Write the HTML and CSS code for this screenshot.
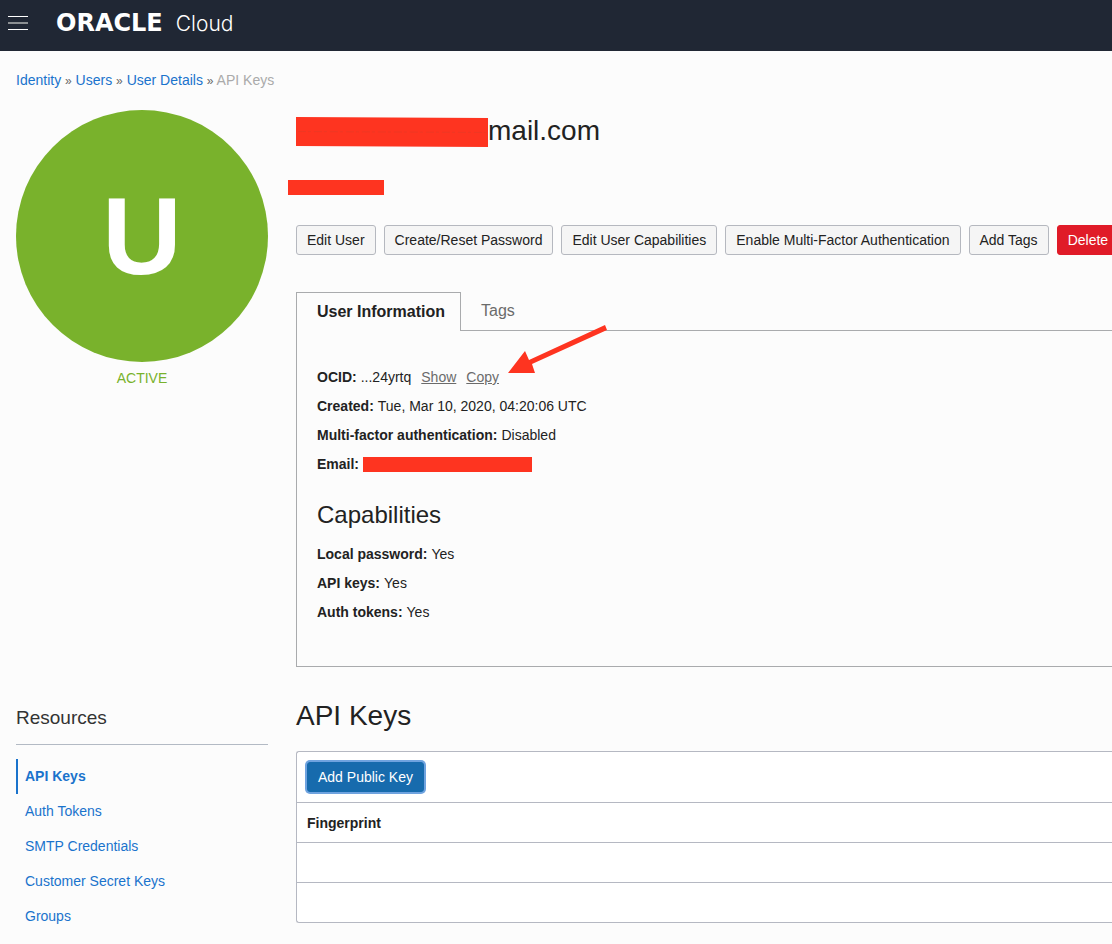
FILE: index.html
```html
<!DOCTYPE html>
<html lang="en">
<head>
<meta charset="utf-8">
<meta name="viewport" content="width=device-width, initial-scale=1">
<title>User Details - Oracle Cloud</title>
<link rel="stylesheet" href="styles.css">
</head>
<body>
<header class="topbar">
  <button class="menu-button" type="button" aria-label="Open navigation menu">
    <svg width="20" height="16" viewBox="0 0 20 16" aria-hidden="true">
      <rect y="1" width="20" height="1" fill="#fff"/>
      <rect y="7" width="20" height="2" fill="#8b8f92"/>
      <rect y="14" width="20" height="1" fill="#fff"/>
    </svg>
  </button>
  <a class="brand" href="#"><span class="brand-name">ORACLE</span><span class="brand-product">Cloud</span></a>
</header>

<main class="page">
  <nav class="breadcrumb" aria-label="Breadcrumb">
    <a href="#">Identity</a> <span class="sep">»</span> <a href="#">Users</a> <span class="sep">»</span> <a href="#">User Details</a> <span class="sep">»</span> <span class="current">API Keys</span>
  </nav>

  <div class="layout">
    <aside class="profile">
      <div class="avatar">U</div>
      <p class="status">ACTIVE</p>
    </aside>

    <section class="details">
      <h1 class="title">
        <svg class="title-mask" width="192" height="30" viewBox="0 0 192 30" aria-hidden="true"><path d="M0 0L192 1V30L0 29Z" fill="#fe3420"/><path d="M2 14.500L190 15.500" stroke="#e63b27" stroke-width="1" stroke-dasharray="8 2 3 3" opacity=".6"/></svg><span>mail.com</span>
      </h1>
      <div class="mask mask-description"></div>

      <div class="actions">
        <button class="button" type="button">Edit User</button>
        <button class="button" type="button">Create/Reset Password</button>
        <button class="button" type="button">Edit User Capabilities</button>
        <button class="button" type="button">Enable Multi-Factor Authentication</button>
        <button class="button" type="button">Add Tags</button>
        <button class="button button-danger" type="button">Delete</button>
      </div>

      <div class="tabs" role="tablist">
        <button class="tab tab-active" type="button" role="tab" aria-selected="true">User Information</button>
        <button class="tab" type="button" role="tab" aria-selected="false">Tags</button>
      </div>
      <div class="panel" role="tabpanel">
        <dl class="facts">
          <div class="fact">
            <dt>OCID:</dt>
            <dd class="ocid"><span>...24yrtq</span><a href="#">Show</a><span class="copy"><a href="#">Copy</a><svg class="arrow" width="102" height="54" viewBox="0 0 102 54" aria-hidden="true"><path d="M98 2L100 7L25 41L28 50L1 50L18 28L22 37Z" fill="#fe3420"/></svg></span></dd>
          </div>
          <div class="fact"><dt>Created:</dt><dd>Tue, Mar 10, 2020, 04:20:06 UTC</dd></div>
          <div class="fact"><dt>Multi-factor authentication:</dt><dd>Disabled</dd></div>
          <div class="fact"><dt>Email:</dt><dd class="mask mask-email"></dd></div>
        </dl>
        <h3 class="subheading">Capabilities</h3>
        <dl class="facts">
          <div class="fact"><dt>Local password:</dt><dd>Yes</dd></div>
          <div class="fact"><dt>API keys:</dt><dd>Yes</dd></div>
          <div class="fact"><dt>Auth tokens:</dt><dd>Yes</dd></div>
        </dl>
      </div>
    </section>

    <nav class="resources" aria-labelledby="resources-title">
      <h2 class="resources-title" id="resources-title">Resources</h2>
      <ul class="resource-list">
        <li><a class="resource resource-active" href="#" aria-current="page">API Keys</a></li>
        <li><a class="resource" href="#">Auth Tokens</a></li>
        <li><a class="resource" href="#">SMTP Credentials</a></li>
        <li><a class="resource" href="#">Customer Secret Keys</a></li>
        <li><a class="resource" href="#">Groups</a></li>
      </ul>
    </nav>

    <section class="keys">
      <h2 class="keys-title">API Keys</h2>
      <div class="key-box">
        <div class="key-toolbar"><button class="button button-primary" type="button">Add Public Key</button></div>
        <table class="key-table">
          <thead><tr><th scope="col">Fingerprint</th></tr></thead>
          <tbody><tr><td></td></tr><tr><td></td></tr></tbody>
        </table>
      </div>
    </section>
  </div>
</main>
</body>
</html>
```

FILE: styles.css
```css
* {
  box-sizing: border-box;
}

body {
  margin: 0;
  background: #fcfcfc;
  color: #222;
  font: 14px/20px "Liberation Sans", Arial, sans-serif;
}

h1, h2, h3, p, dl, dd, ul {
  margin: 0;
  padding: 0;
  font-weight: 400;
}

button {
  font: inherit;
  cursor: pointer;
}

a {
  color: #1a73cc;
  text-decoration: none;
}

.topbar {
  display: flex;
  align-items: center;
  gap: 28px;
  height: 51px;
  padding: 0 8px 5px;
  background: #202734;
}

.menu-button {
  display: flex;
  padding: 0;
  border: 0;
  background: none;
}

.brand {
  display: flex;
  align-items: baseline;
  gap: 13px;
  color: #fff;
  line-height: 28px;
}

.brand-name {
  font-family: "DejaVu Sans", sans-serif;
  font-size: 24px;
  font-weight: 700;
}

.brand-product {
  font-family: Inter, sans-serif;
  font-size: 21px;
  font-weight: 300;
}

.page {
  padding: 19px 0 10px 16px;
  overflow: hidden;
}

.breadcrumb {
  margin-bottom: 20px;
}

.sep {
  color: #666;
  font-size: 12px;
  line-height: 12px;
}

.current {
  color: #aaa;
}

.layout {
  display: grid;
  grid-template-columns: 252px minmax(0, 1fr);
  gap: 30px 28px;
}

.avatar {
  display: flex;
  align-items: center;
  justify-content: center;
  aspect-ratio: 1;
  border-radius: 50%;
  background: #79b22c;
  color: #fff;
  font-size: 110px;
  font-weight: 700;
}

.status {
  color: #79b22c;
  line-height: 32px;
  text-align: center;
}

.title {
  display: flex;
  align-items: center;
  font-size: 28px;
  line-height: 42px;
}

.title-mask {
  margin-top: 2px;
}

.mask {
  height: 15px;
  background: #fe3420;
}

.mask-description {
  width: 96px;
  margin: 28px 0 30px -8px;
}

.mask-email {
  width: 169px;
}

.actions {
  display: flex;
  gap: 8px;
  margin-bottom: 37px;
}

.button {
  flex: none;
  height: 30px;
  padding: 0 10px;
  border: 1px solid #b5b8bf;
  border-radius: 3px;
  background: #f5f5f5;
  color: #222;
  white-space: nowrap;
}

.button-danger {
  border-color: #e01b28;
  background: #e01b28;
  color: #fff;
}

.tabs {
  display: flex;
}

.tab {
  height: 38px;
  padding: 0 20px;
  border: 0;
  background: none;
  color: #6b6b6b;
  font-size: 16px;
}

.tab-active {
  z-index: 1;
  height: 39px;
  margin-bottom: -1px;
  padding: 0 15px 0 20px;
  border: 1px solid #a9abad;
  border-bottom: 0;
  background: #fcfcfc;
  color: #222;
  font-weight: 700;
}

.panel {
  padding: 32px 20px 39px;
  border: 1px solid #a9abad;
  border-right: 0;
}

.fact {
  display: flex;
  align-items: center;
  gap: 4px;
  line-height: 29px;
}

.fact dt {
  font-weight: 700;
}

.ocid {
  display: flex;
  gap: 10px;
}

.ocid a {
  color: #6b6b6b;
  text-decoration: underline;
}

.copy {
  position: relative;
}

.arrow {
  position: absolute;
  bottom: 15px;
  left: calc(100% + 8px);
}

.subheading {
  margin: 21px 0 11px;
  font-size: 24px;
  line-height: 29px;
}

.resources-title {
  padding-bottom: 5px;
  border-bottom: 1px solid #b3bac4;
  color: #333;
  font-size: 19px;
  line-height: 42px;
}

.resource-list {
  margin-top: 14px;
  list-style: none;
}

.resource {
  display: block;
  padding-left: 7px;
  border-left: 2px solid transparent;
  line-height: 35px;
}

.resource-active {
  border-color: #1a73cc;
  font-weight: 700;
}

.keys-title {
  margin-bottom: 16px;
  font-size: 28px;
  line-height: 38px;
}

.key-box {
  border: 1px solid #b5b8c2;
  border-right: 0;
  border-radius: 3px 0 0 3px;
  background: #fff;
}

.key-toolbar {
  padding: 10px;
}

.button-primary {
  border-color: #176bad;
  background: #176bad;
  box-shadow: 0 0 0 2px #6fa3df;
  color: #fff;
}

.key-table {
  width: 100%;
  border-spacing: 0;
}

.key-table th,
.key-table td {
  height: 40px;
  padding: 0 10px;
  border-top: 1px solid #b5b8c2;
  text-align: left;
}
```
